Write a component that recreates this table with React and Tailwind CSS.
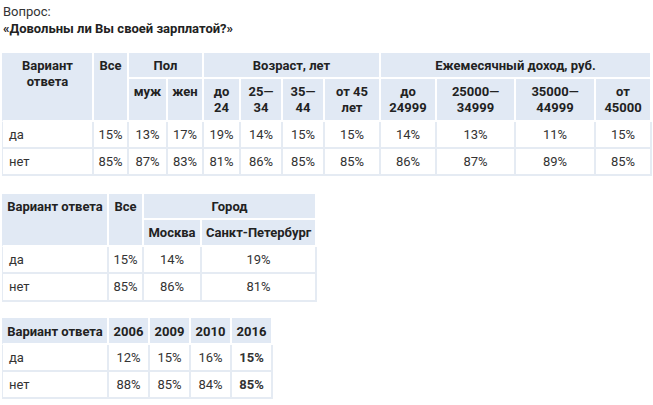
const th = "bg-[#e1e9f4] border-r-2 border-b-2 border-white px-1 pt-[5px] align-top text-center font-bold text-[#222]"
const td = "border-r-2 border-b-2 border-[#e5ebf3] align-middle text-center text-[#333] px-1"
const tdFirst = "border-l border-r-2 border-b-2 border-[#e5ebf3] align-middle text-left text-[#333] pl-[6px]"

function Cols({ widths }) {
  return (
    <colgroup>
      {widths.map((w, i) => (
        <col key={i} className={w} />
      ))}
    </colgroup>
  )
}

function DataRow({ label, values, bold = [], h = "h-[27px]" }) {
  return (
    <tr className={h}>
      <td className={tdFirst}>{label}</td>
      {values.map((v, i) => (
        <td key={i} className={`${td} ${bold.includes(i) ? "font-bold text-[#222]" : ""}`}>{v}</td>
      ))}
    </tr>
  )
}

export default function App() {
  return (
    <div className="w-[653px] h-[405px] bg-white font-['Roboto',sans-serif] text-[13px] leading-4 text-[#333] overflow-hidden">
      <div className="pt-[3px] pl-[3px] leading-[17px]">
        <p>Вопрос:</p>
        <p className="font-bold text-[#222]">«Довольны ли Вы своей зарплатой?»</p>
      </div>

      <table className="table-fixed border-separate border-spacing-0 w-[650px] ml-[2px] mt-[16px]">
        <Cols widths={["w-[92px]", "w-[35px]", "w-[39px]", "w-[36px]", "w-[37px]", "w-[42px]", "w-[42px]", "w-[56px]", "w-[56px]", "w-[79px]", "w-[80px]", "w-[56px]"]} />
        <thead>
          <tr className="h-[26px]">
            <th rowSpan={2} className={`${th} border-l border-l-[#e1e9f4]`}>Вариант ответа</th>
            <th rowSpan={2} className={th}>Все</th>
            <th colSpan={2} className={th}>Пол</th>
            <th colSpan={4} className={th}>Возраст, лет</th>
            <th colSpan={4} className={th}>Ежемесячный доход, руб.</th>
          </tr>
          <tr className="h-[43px]">
            <th className={th}>муж</th>
            <th className={th}>жен</th>
            <th className={th}>до 24</th>
            <th className={th}>25—<br />34</th>
            <th className={th}>35—<br />44</th>
            <th className={th}>от 45 лет</th>
            <th className={th}>до 24999</th>
            <th className={th}>25000—<br />34999</th>
            <th className={th}>35000—<br />44999</th>
            <th className={th}>от 45000</th>
          </tr>
        </thead>
        <tbody>
          <DataRow label="да" values={["15%", "13%", "17%", "19%", "14%", "15%", "15%", "14%", "13%", "11%", "15%"]} />
          <DataRow label="нет" values={["85%", "87%", "83%", "81%", "86%", "85%", "85%", "86%", "87%", "89%", "85%"]} />
        </tbody>
      </table>

      <table className="table-fixed border-separate border-spacing-0 w-[315px] ml-[2px] mt-[18px]">
        <Cols widths={["w-[107px]", "w-[35px]", "w-[58px]", "w-[115px]"]} />
        <thead>
          <tr className="h-[26px]">
            <th rowSpan={2} className={`${th} border-l border-l-[#e1e9f4]`}>Вариант ответа</th>
            <th rowSpan={2} className={th}>Все</th>
            <th colSpan={2} className={th}>Город</th>
          </tr>
          <tr className="h-[27px]">
            <th className={`${th} whitespace-nowrap px-0`}>Москва</th>
            <th className={`${th} whitespace-nowrap px-0`}>Санкт-Петербург</th>
          </tr>
        </thead>
        <tbody>
          <DataRow label="да" values={["15%", "14%", "19%"]} />
          <DataRow label="нет" values={["85%", "86%", "81%"]} h="h-[28px]" />
        </tbody>
      </table>

      <table className="table-fixed border-separate border-spacing-0 w-[271px] ml-[2px] mt-[16px]">
        <Cols widths={["w-[107px]", "w-[41px]", "w-[41px]", "w-[41px]", "w-[41px]"]} />
        <thead>
          <tr className="h-[27px]">
            <th className={`${th} border-l border-l-[#e1e9f4] pt-[6px] whitespace-nowrap`}>Вариант ответа</th>
            <th className={`${th} pt-[6px]`}>2006</th>
            <th className={`${th} pt-[6px]`}>2009</th>
            <th className={`${th} pt-[6px]`}>2010</th>
            <th className={`${th} pt-[6px]`}>2016</th>
          </tr>
        </thead>
        <tbody>
          <DataRow label="да" values={["12%", "15%", "16%", "15%"]} bold={[3]} />
          <DataRow label="нет" values={["88%", "85%", "84%", "85%"]} bold={[3]} />
        </tbody>
      </table>
    </div>
  )
}
